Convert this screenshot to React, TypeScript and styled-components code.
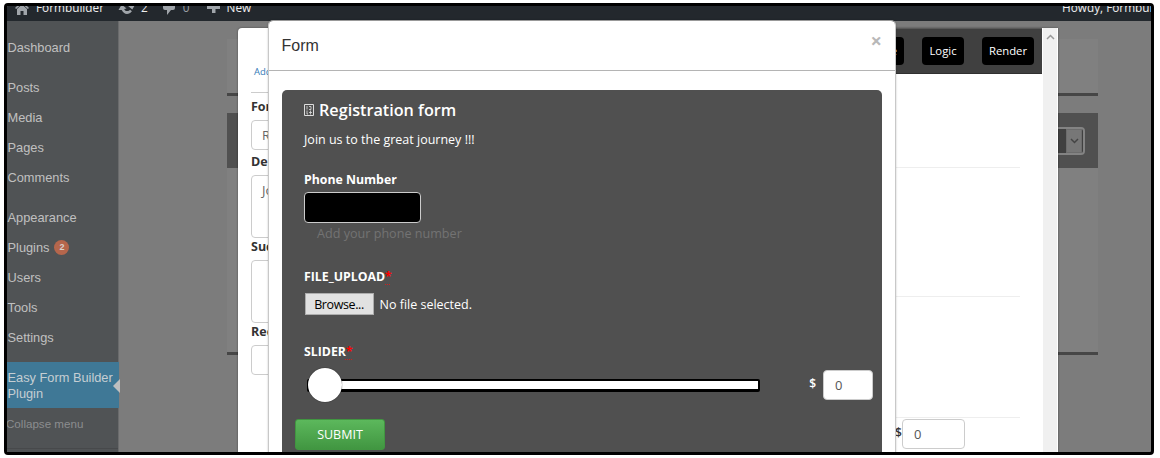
import React from "react";
import styled, { createGlobalStyle } from "styled-components";

const Global = createGlobalStyle`
  *, *::before, *::after { box-sizing: border-box; }
  body { margin: 0; background: #fff; font-family: "Open Sans", "Noto Sans", sans-serif; }
  #root { height: 458px; overflow: hidden; }
`;

const Frame = styled.div`
  position: relative;
  width: 1150px;
  height: 452px;
  margin: 3px 0 0 4px;
  border: 3px solid #000;
  border-radius: 4px;
  overflow: hidden;
  background: #7c7c7c;
  white-space: nowrap;
`;

const AdminBar = styled.header`
  display: flex;
  align-items: flex-end;
  height: 15px;
  padding: 0 0 6px 7px;
  background: #23282d;
  color: #eee;
  font-size: 11.8px;
  line-height: 15px;
  font-family: "Open Sans", sans-serif;
  svg { display: block; fill: #a0a5aa; flex: none; }
`;

const BarItem = styled.div<{ $gap: number; $after: number; $dim?: boolean }>`
  display: flex;
  align-items: flex-end;
  gap: ${(p) => p.$gap}px;
  margin-right: ${(p) => p.$after}px;
  color: ${(p) => (p.$dim ? "#9a9ea2" : "#eee")};
`;

const Greeting = styled.div`
  margin-left: auto;
  width: 89px;
  overflow: hidden;
`;

const Page = styled.div`
  display: flex;
  height: 431px;
`;

const Sidebar = styled.nav`
  width: 112px;
  padding-top: 11px;
  background: #505355;
  border-right: 1px solid #6a6b6c;
  font-family: "Liberation Sans", Arial, sans-serif;
  font-size: 12.8px;
  color: #c0c0c0;
`;

const MenuItem = styled.div<{ $spaced?: boolean }>`
  display: flex;
  align-items: center;
  height: 30px;
  padding-left: 0.5px;
  margin-top: ${(p) => (p.$spaced ? 10 : 0)}px;
`;

const Count = styled.span`
  width: 15px;
  height: 15px;
  margin-left: 5px;
  border-radius: 50%;
  background: #b5664c;
  color: #d8d0cc;
  font-size: 9px;
  font-weight: 700;
  line-height: 15px;
  text-align: center;
`;

const CurrentItem = styled.div`
  display: flex;
  align-items: center;
  justify-content: space-between;
  width: 112px;
  height: 46px;
  margin-top: 10px;
  padding: 1px 0 0 0.5px;
  background: #3f7896;
  color: #c5ced3;
  line-height: 16px;
  svg { display: block; flex: none; fill: #bfbfbf; }
`;

const Collapse = styled.div`
  height: 41px;
  margin-left: -1px;
  border-bottom: 1px solid #47494b;
  color: #8b8d8f;
  font-size: 11.6px;
  line-height: 31px;
`;

const Main = styled.main`
  width: 979px;
  padding: 18px 0 0 108px;
`;

const Panel = styled.section<{ $height: number }>`
  height: ${(p) => p.$height}px;
  margin-bottom: 17px;
  background: #808080;
  border-bottom: 3px solid #464646;
`;

const PanelHead = styled.div`
  display: flex;
  justify-content: flex-end;
  height: 55px;
  padding: 14px 13px 0 0;
  background: #505050;
`;

const Select = styled.div`
  display: flex;
  width: 60px;
  height: 28px;
  padding: 0 1px 0 0;
  border: 2px solid #838383;
  border-radius: 4px;
  background: #404040;
  justify-content: flex-end;
`;

const SelectArrow = styled.div`
  display: flex;
  align-items: center;
  justify-content: center;
  width: 16px;
  border: 1px solid #6c6c6c;
  background: #777;
`;

const Editor = styled.div`
  position: absolute;
  left: 231px;
  top: 22px;
  width: 820px;
  height: 440px;
  display: flex;
  background: #fff;
  border-radius: 4px 0 0 0;
  box-shadow: 0 0 2px rgba(0, 0, 0, 0.5);
  color: #333;
`;

const EditorForm = styled.div`
  width: 657px;
  padding: 37px 0 0 13px;
`;

const AddLink = styled.div`
  height: 28px;
  padding-left: 3px;
  border-bottom: 1px solid #ccc;
  color: #337ab7;
  font-size: 9.5px;
  line-height: 14px;
`;

const FieldLabel = styled.div<{ $height: number }>`
  height: ${(p) => p.$height}px;
  padding-top: ${(p) => p.$height - 21}px;
  font-size: 12.5px;
  font-weight: 700;
  line-height: 16px;
`;

const Field = styled.div<{ $height: number }>`
  height: ${(p) => p.$height}px;
  padding: 5px 10px;
  border: 1px solid #ccc;
  border-radius: 4px;
  color: #666;
  font-size: 13px;
  line-height: 18px;
`;

const EditorSide = styled.div`
  width: 147px;
`;

const Toolbar = styled.div`
  display: flex;
  justify-content: flex-end;
  gap: 18px;
  height: 46px;
  padding: 8px 8px 0 0;
  background: #404040;
  border-top: 1px solid #595959;
  border-bottom: 1px solid #303030;
`;

const ToolButton = styled.div<{ $width: number; $end?: boolean }>`
  flex: none;
  width: ${(p) => p.$width}px;
  height: 28px;
  padding-right: ${(p) => (p.$end ? 7 : 0)}px;
  border-radius: 4px;
  background: #000;
  color: #fff;
  font-size: 11.3px;
  line-height: 27px;
  text-align: ${(p) => (p.$end ? "right" : "center")};
`;

const Row = styled.div<{ $height: number }>`
  width: 125px;
  height: ${(p) => p.$height}px;
  border-bottom: 1px solid #eee;
`;

const Scrollbar = styled.div`
  width: 15px;
  margin-left: 1px;
  padding: 6px 0 0 3px;
  line-height: 0;
  background: #f0f0f0;
  border-right: 1px solid #fff;
`;

const Amount = styled.div<{ $dark?: boolean }>`
  display: flex;
  align-items: flex-start;
  gap: ${(p) => (p.$dark ? 7 : 0)}px;
  margin-top: ${(p) => (p.$dark ? 0 : 1)}px;
  font-size: 12px;
  font-weight: 600;
  line-height: 27px;
  color: ${(p) => (p.$dark ? "#fff" : "#333")};
`;

const AmountInput = styled.div<{ $width: number }>`
  width: ${(p) => p.$width}px;
  height: 30px;
  padding-left: 11px;
  border: 1px solid #ccc;
  border-radius: 4px;
  background: #fff;
  color: #555;
  font-size: 13px;
  font-weight: 400;
  line-height: 29px;
`;

const Modal = styled.div`
  position: absolute;
  left: 261px;
  top: 14px;
  width: 628px;
  height: 450px;
  border: 1px solid #c8c8c8;
  border-top-color: #999;
  border-radius: 5px;
  background: #fff;
  background-clip: padding-box;
  box-shadow: 0 0 2px rgba(0, 0, 0, 0.25);
`;

const ModalHead = styled.div`
  display: flex;
  justify-content: space-between;
  height: 50px;
  padding: 0 13px 0 12.5px;
  border-bottom: 1px solid #b4b4b4;
  color: #333;
  font-family: "Liberation Sans", Arial, sans-serif;
  font-size: 16px;
  line-height: 49px;
`;

const Close = styled.span`
  color: #b8b8b8;
  font-family: "Open Sans", sans-serif;
  font-size: 20px;
  font-weight: 700;
  line-height: 40px;
`;

const FormCard = styled.div`
  width: 600px;
  height: 380px;
  margin: 19px 0 0 13px;
  padding: 9px 9px 0 22px;
  border-radius: 5px 5px 0 0;
  background: #505050;
  color: #fff;
  font-size: 12.6px;
`;

const FormTitle = styled.h1`
  display: flex;
  align-items: center;
  gap: 5px;
  margin: 0;
  font-size: 16.2px;
  font-weight: 600;
  line-height: 22px;
`;

const Intro = styled.p`
  margin: 10px 0 0;
  font-size: 12.5px;
  line-height: 18px;
`;

const Label = styled.div<{ $top: number }>`
  margin-top: ${(p) => p.$top}px;
  font-size: 12.3px;
  font-weight: 700;
  line-height: 18px;
`;

const Required = styled.span`
  color: #f00;
  text-decoration: underline dotted #c22 1px;
  text-underline-offset: 3px;
`;

const PhoneInput = styled.div`
  width: 117px;
  height: 31px;
  margin-top: 3px;
  border: 1px solid #ccc;
  border-radius: 4px;
  background: #000;
`;

const Hint = styled.div`
  padding-left: 13px;
  margin-top: 2px;
  color: #737373;
  line-height: 18px;
`;

const FileRow = styled.div`
  display: flex;
  gap: 6px;
  margin: 7px 0 0 0.5px;
  font-size: 12.5px;
  line-height: 23px;
`;

const Browse = styled.div`
  width: 69px;
  height: 22px;
  border: 1px solid #adadad;
  background: #e1e1e1;
  color: #000;
  line-height: 21px;
  letter-spacing: -0.4px;
  text-align: center;
`;

const SliderRow = styled.div`
  display: flex;
  align-items: center;
  justify-content: space-between;
  height: 34px;
  margin-top: 7px;
`;

const Track = styled.div`
  display: flex;
  align-items: center;
  width: 453px;
  height: 13px;
  margin-left: 3px;
  border: 2px solid #000;
  border-width: 2px 2px 3px;
  border-radius: 2px;
  background: #fff;
`;

const Knob = styled.div`
  width: 34px;
  height: 34px;
  margin-left: -1px;
  border-radius: 50%;
  background: #fff;
  box-shadow: 0 0 1px #000;
  flex: none;
`;

const Submit = styled.div`
  width: 90px;
  height: 31px;
  margin: 17px 0 0 -9px;
  border: 1px solid #419641;
  border-radius: 3px;
  background: linear-gradient(#5cb85c, #419641);
  line-height: 29px;
  font-size: 12.5px;
  text-align: center;
`;

const HomeIcon = () => (
  <svg width="16" height="15" viewBox="0 0 16 15">
    <path d="M8 1 15 8l-1.200 1L8 3.500 2.200 9 1 8zM3 9l5-4.500L13 9v6H9.500v-4h-3v4H3z" />
  </svg>
);
const UpdateIcon = () => (
  <svg width="18" height="16" viewBox="0 0 18 16">
    <path d="M9 2c2.300 0 4.300 1.300 5.300 3.300L17.500 5l-3.200 5.500-4.800-4 2.300-.4C11.400 5 10.300 4.400 9 4.400c-1.200 0-2.200.5-2.900 1.400L4.300 4.300C5.500 2.900 7.100 2 9 2zM3.700 5.500l4.800 4-2.300.4c.6 1.500 1.700 2.200 3 2.200 1.200 0 2.200-.5 2.900-1.400l1.800 1.500C12.500 14 10.900 15 9 15c-2.300 0-4.300-1.700-5.300-4L.5 11z" />
  </svg>
);
const CommentIcon = () => (
  <svg width="14" height="15" viewBox="0 0 14 15">
    <path d="M3 1h8q2 0 2 2v5q0 2-2 2H9l-4 5v-5H3q-2 0-2-2V3q0-2 2-2z" />
  </svg>
);
const PlusIcon = () => (
  <svg width="13" height="14" viewBox="0 0 13 14">
    <path d="M5 0h3.500v4.500H13V8H8.500v4H5V8H0V4.500h5z" />
  </svg>
);
const Chevron = ({ up, color }: { up?: boolean; color: string }) => (
  <svg width="9" height="6" viewBox="0 0 9 6" fill="none" stroke={color} strokeWidth="1.500">
    <path d={up ? "M1 5l3.500-3.500L8 5" : "M1 1l3.500 3.500L8 1"} />
  </svg>
);
const MissingGlyph = () => (
  <svg width="10" height="12" viewBox="0 0 10 12" fill="none" stroke="#ddd">
    <path d="M.5.5h9v11h-9z" />
    <path d="M3 2v3.500M5 2.500h2v3H5M3 6.500v3.500h1M6.500 6.500v4M5 8.500h3" strokeWidth=".8" />
  </svg>
);

export default function App() {
  return (
    <>
      <Global />
      <Frame>
        <AdminBar>
          <BarItem $gap={6} $after={14}><HomeIcon />Formbuilder</BarItem>
          <BarItem $gap={5} $after={14}><UpdateIcon />2</BarItem>
          <BarItem $gap={7} $after={17} $dim><CommentIcon />0</BarItem>
          <BarItem $gap={7} $after={0}><PlusIcon />New</BarItem>
          <Greeting>Howdy, Formbuilder</Greeting>
        </AdminBar>
        <Page>
          <Sidebar>
            <MenuItem>Dashboard</MenuItem>
            <MenuItem $spaced>Posts</MenuItem>
            <MenuItem>Media</MenuItem>
            <MenuItem>Pages</MenuItem>
            <MenuItem>Comments</MenuItem>
            <MenuItem $spaced>Appearance</MenuItem>
            <MenuItem>Plugins<Count>2</Count></MenuItem>
            <MenuItem>Users</MenuItem>
            <MenuItem>Tools</MenuItem>
            <MenuItem>Settings</MenuItem>
            <CurrentItem>
              <span>Easy Form Builder<br />Plugin</span>
              <svg width="7" height="14" viewBox="0 0 7 14"><path d="M7 0v14L0 7z" /></svg>
            </CurrentItem>
            <Collapse>Collapse menu</Collapse>
          </Sidebar>
          <Main>
            <Panel $height={57} />
            <Panel $height={242}>
              <PanelHead>
                <Select><SelectArrow><Chevron color="#444" /></SelectArrow></Select>
              </PanelHead>
            </Panel>
          </Main>
        </Page>

        <Editor>
          <EditorForm>
            <AddLink>Add</AddLink>
            <FieldLabel $height={27}>For</FieldLabel>
            <Field $height={30}>R</Field>
            <FieldLabel $height={25}>De</FieldLabel>
            <Field $height={63}>Jo</Field>
            <FieldLabel $height={22}>Suc</FieldLabel>
            <Field $height={63} />
            <FieldLabel $height={22}>Rec</FieldLabel>
            <Field $height={30} />
          </EditorForm>
          <EditorSide>
            <Toolbar>
              <ToolButton $width={43} $end>e</ToolButton>
              <ToolButton $width={42}>Logic</ToolButton>
              <ToolButton $width={52}>Render</ToolButton>
            </Toolbar>
            <Row $height={94} />
            <Row $height={129} />
            <Row $height={121} />
            <Amount>$<AmountInput $width={63}>0</AmountInput></Amount>
          </EditorSide>
          <Scrollbar><Chevron up color="#999" /></Scrollbar>
        </Editor>

        <Modal>
          <ModalHead>Form<Close>×</Close></ModalHead>
          <FormCard>
            <FormTitle><MissingGlyph />Registration form</FormTitle>
            <Intro>Join us to the great journey !!!</Intro>
            <Label $top={22}>Phone Number</Label>
            <PhoneInput />
            <Hint>Add your phone number</Hint>
            <Label $top={25}>FILE_UPLOAD<Required>*</Required></Label>
            <FileRow><Browse>Browse...</Browse>No file selected.</FileRow>
            <Label $top={27}>SLIDER<Required>*</Required></Label>
            <SliderRow>
              <Track><Knob /></Track>
              <Amount $dark>$<AmountInput $width={50}>0</AmountInput></Amount>
            </SliderRow>
            <Submit>SUBMIT</Submit>
          </FormCard>
        </Modal>
      </Frame>
    </>
  );
}
